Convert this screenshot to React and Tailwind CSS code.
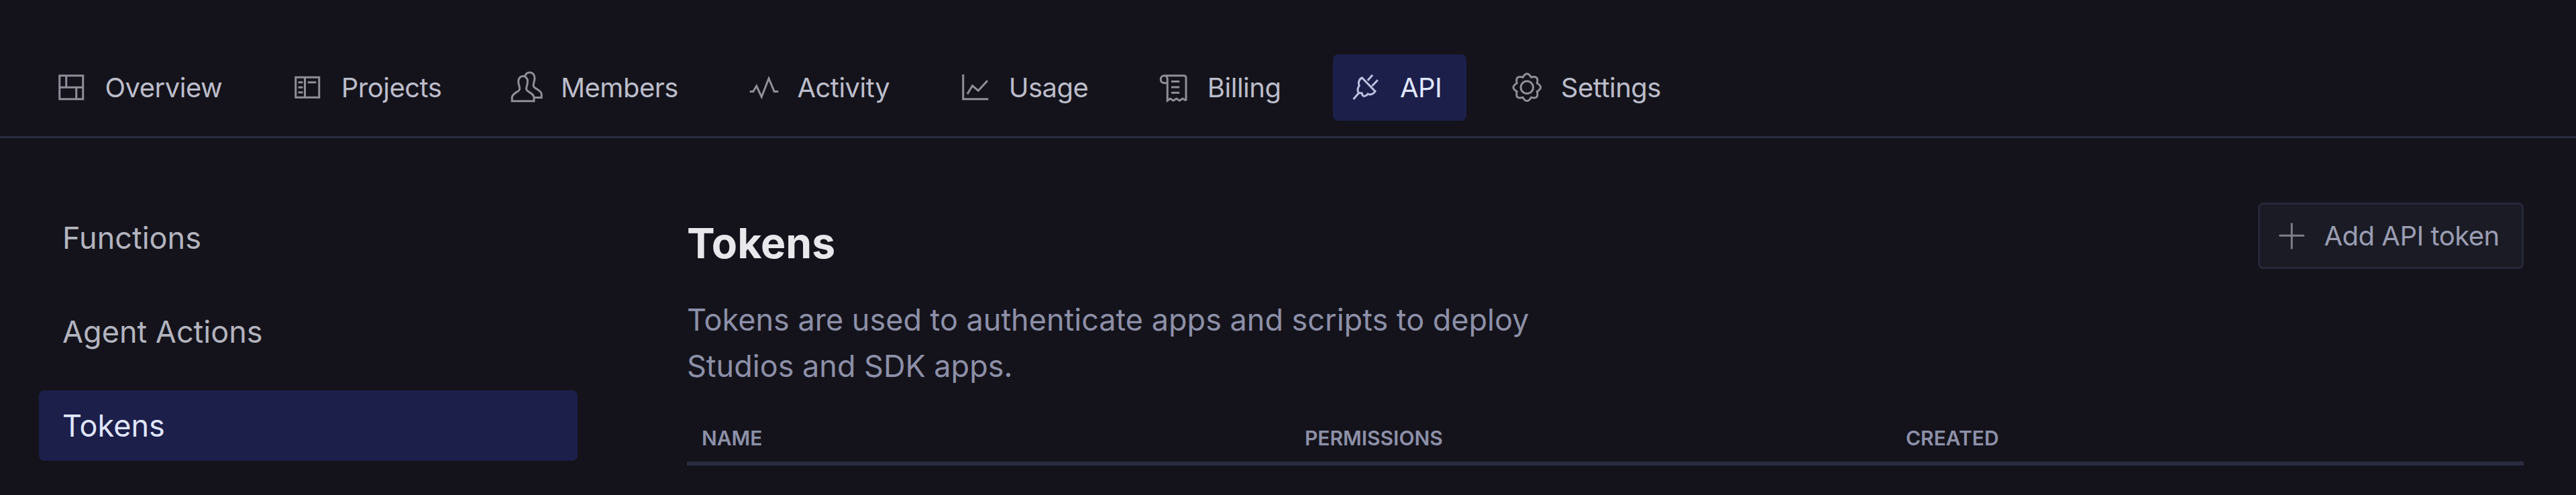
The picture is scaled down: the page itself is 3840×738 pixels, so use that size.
const S = { fill: "none", stroke: "currentColor", strokeWidth: 1.2 };

const gearPath = (() => {
  const p = (r, a) => `${(12.5 + r * Math.sin(a)).toFixed(2)} ${(12.5 - r * Math.cos(a)).toFixed(2)}`;
  const n = 8;
  const step = (Math.PI * 2) / n;
  let d = `M${p(6.5, -step / 2)}`;
  for (let i = 0; i < n; i++) {
    d += ` Q${p(10.2, i * step)} ${p(6.5, i * step + step / 2)}`;
  }
  return d + "Z";
})();

const Icon = ({ children, className = "" }) => (
  <svg viewBox="0 0 25 25" {...S} className={`w-[62.5px] h-[62.5px] shrink-0 ${className}`}>
    {children}
  </svg>
);

const icons = {
  overview: <path d="M5.5 5.5H19.5V19.5H5.5ZM5.5 12.5H19.5M9.5 5.5V12.5M15.5 12.5V19.5" />,
  projects: <path d="M5.5 6.5H19.5V18.5H5.5ZM11 6.5V18.5M7 9.5H9.8M7 12.5H9.8M7 15.5H9.8M12.7 9.5H17.7" />,
  members: (
    <>
      <path d="M3.7 20.7V18.6C3.7 16.8 5.5 16 7 15C8.7 14 8.3 13 8 11.8C7.6 10.6 7.5 10 7.5 9C7.5 7 8.8 5.8 10.2 5.8C11.7 5.8 13 7 13 9C13 10 12.9 10.6 12.5 11.8C12.2 13 11.8 14 13.5 15C15 16 16.8 16.8 16.8 18.6V20.7Z" />
      <path d="M11.3 6C11.8 4.5 12.9 3.6 14.3 3.6C15.9 3.6 17.2 4.9 17.2 7C17.2 8 17 8.6 16.7 9.8C16.4 11 16 12 17.7 13C19.2 14 21.3 14.8 21.3 16.6V18.6H17.2" />
    </>
  ),
  activity: <path d="M4.3 15H6.3L8.3 11.7L11.3 18.2L15.6 7.2L18.9 15H21.3" />,
  usage: <path d="M5.5 4.8V19.5H20.5M8 16.5L11 11.5L14.5 14.5L20 8.5" />,
  billing: (
    <path d="M20 20.4V6.7C20 5.9 19.5 5.5 18.8 5.5H7C5.6 5.5 4.9 6.6 4.9 7.7C4.9 9 5.7 9.9 7 9.9H8.9M7 5.5C8.2 5.5 8.9 6.5 8.9 7.7V20.4L10.6 19.2L12.4 20.4L14.3 19.2L16.1 20.4L18 19.2L20 20.4M11.2 9H16.1M11.2 12.4H16.1M11.2 15.7H16.1" />
  ),
  api: (
    <path d="M5 19.6L8.2 15.8M13.5 8.4L16.4 5.1M16.1 11.7L19.5 8.1M10.2 6.8L18 14.9C17 16.4 15 17.3 13.6 16.4C12.8 17.7 11 18.2 10.4 17.2L10 15.9L8.2 15.8C7 14.2 7.8 12.3 8.5 11.5C7.6 9.6 8.5 7.4 10.2 6.8Z" />
  ),
  settings: (
    <>
      <path d={gearPath} />
      <circle cx="12.5" cy="12.5" r="3.7" />
    </>
  ),
};

const navItems = [
  ["Overview", "overview"],
  ["Projects", "projects"],
  ["Members", "members"],
  ["Activity", "activity"],
  ["Usage", "usage"],
  ["Billing", "billing"],
  ["API", "api"],
  ["Settings", "settings"],
];

const NavItem = ({ label, icon }) => {
  const active = label === "API";
  return (
    <div
      className={`flex items-center h-[99px] pl-[18px] pr-[37px] gap-[19px] rounded-[8px] text-[40px] tracking-[-0.5px] font-normal ${
        active ? "bg-[#1c1f4a] text-[#e0e7ff]" : "text-[#bcbdca]"
      }`}
    >
      <Icon className={active ? "text-[#bcc2e0]" : "text-[#8f8f9a]"}>{icons[icon]}</Icon>
      <span>{label}</span>
    </div>
  );
};

const SideItem = ({ label, active }) => (
  <div
    className={`flex items-center h-[105px] pl-[35px] rounded-[8px] text-[45px] ${
      active ? "bg-[#1c1f4a] text-[#e0e7ff]" : "text-[#b3b4bf]"
    }`}
  >
    {label}
  </div>
);

export default function App() {
  return (
    <div className="w-[3840px] h-[738px] overflow-hidden bg-[#14131b] font-['Inter',sans-serif]">
      <header className="flex items-start gap-[41px] h-[206px] pt-[81px] pl-[57px] border-b-[3px] border-[#2a2d42]">
        {navItems.map(([label, icon]) => (
          <NavItem key={label} label={label} icon={icon} />
        ))}
      </header>
      <div className="flex pt-[96px] pl-[58px] pr-[78px]">
        <aside className="w-[803px] shrink-0 flex flex-col gap-[35px]">
          <SideItem label="Functions" />
          <SideItem label="Agent Actions" />
          <SideItem label="Tokens" active />
        </aside>
        <main className="ml-[163px] flex-1">
          <div className="flex items-start justify-between">
            <h1 className="text-[62.5px] leading-[100px] pt-[10px] font-bold text-[#e8e8ec]">Tokens</h1>
            <button className="flex items-center w-[396px] h-[99px] pl-[16px] gap-[17px] rounded-[8px] border-[3px] border-[#262838] bg-[#1a1b24] text-[40px] tracking-[-0.5px] font-normal text-[#9a9db2]">
              <Icon className="text-[#7f7f8a]">
                <path d="M12.5 5V20.5M5 12.5H20" />
              </Icon>
              <span>Add API token</span>
            </button>
          </div>
          <p className="mt-[30px] w-[1400px] text-[45px] leading-[69px] text-[#8d90a8]">
            Tokens are used to authenticate apps and scripts to deploy
            <br />
            Studios and SDK apps.
          </p>
          <div className="grid grid-cols-[899px_896px_1fr] mt-[55px] h-[59px] pl-[22px] border-b-[6px] border-[#2a2d42] text-[30px] leading-[36px] font-semibold text-[#8d90a8]">
            <div>NAME</div>
            <div>PERMISSIONS</div>
            <div>CREATED</div>
          </div>
        </main>
      </div>
    </div>
  );
}
